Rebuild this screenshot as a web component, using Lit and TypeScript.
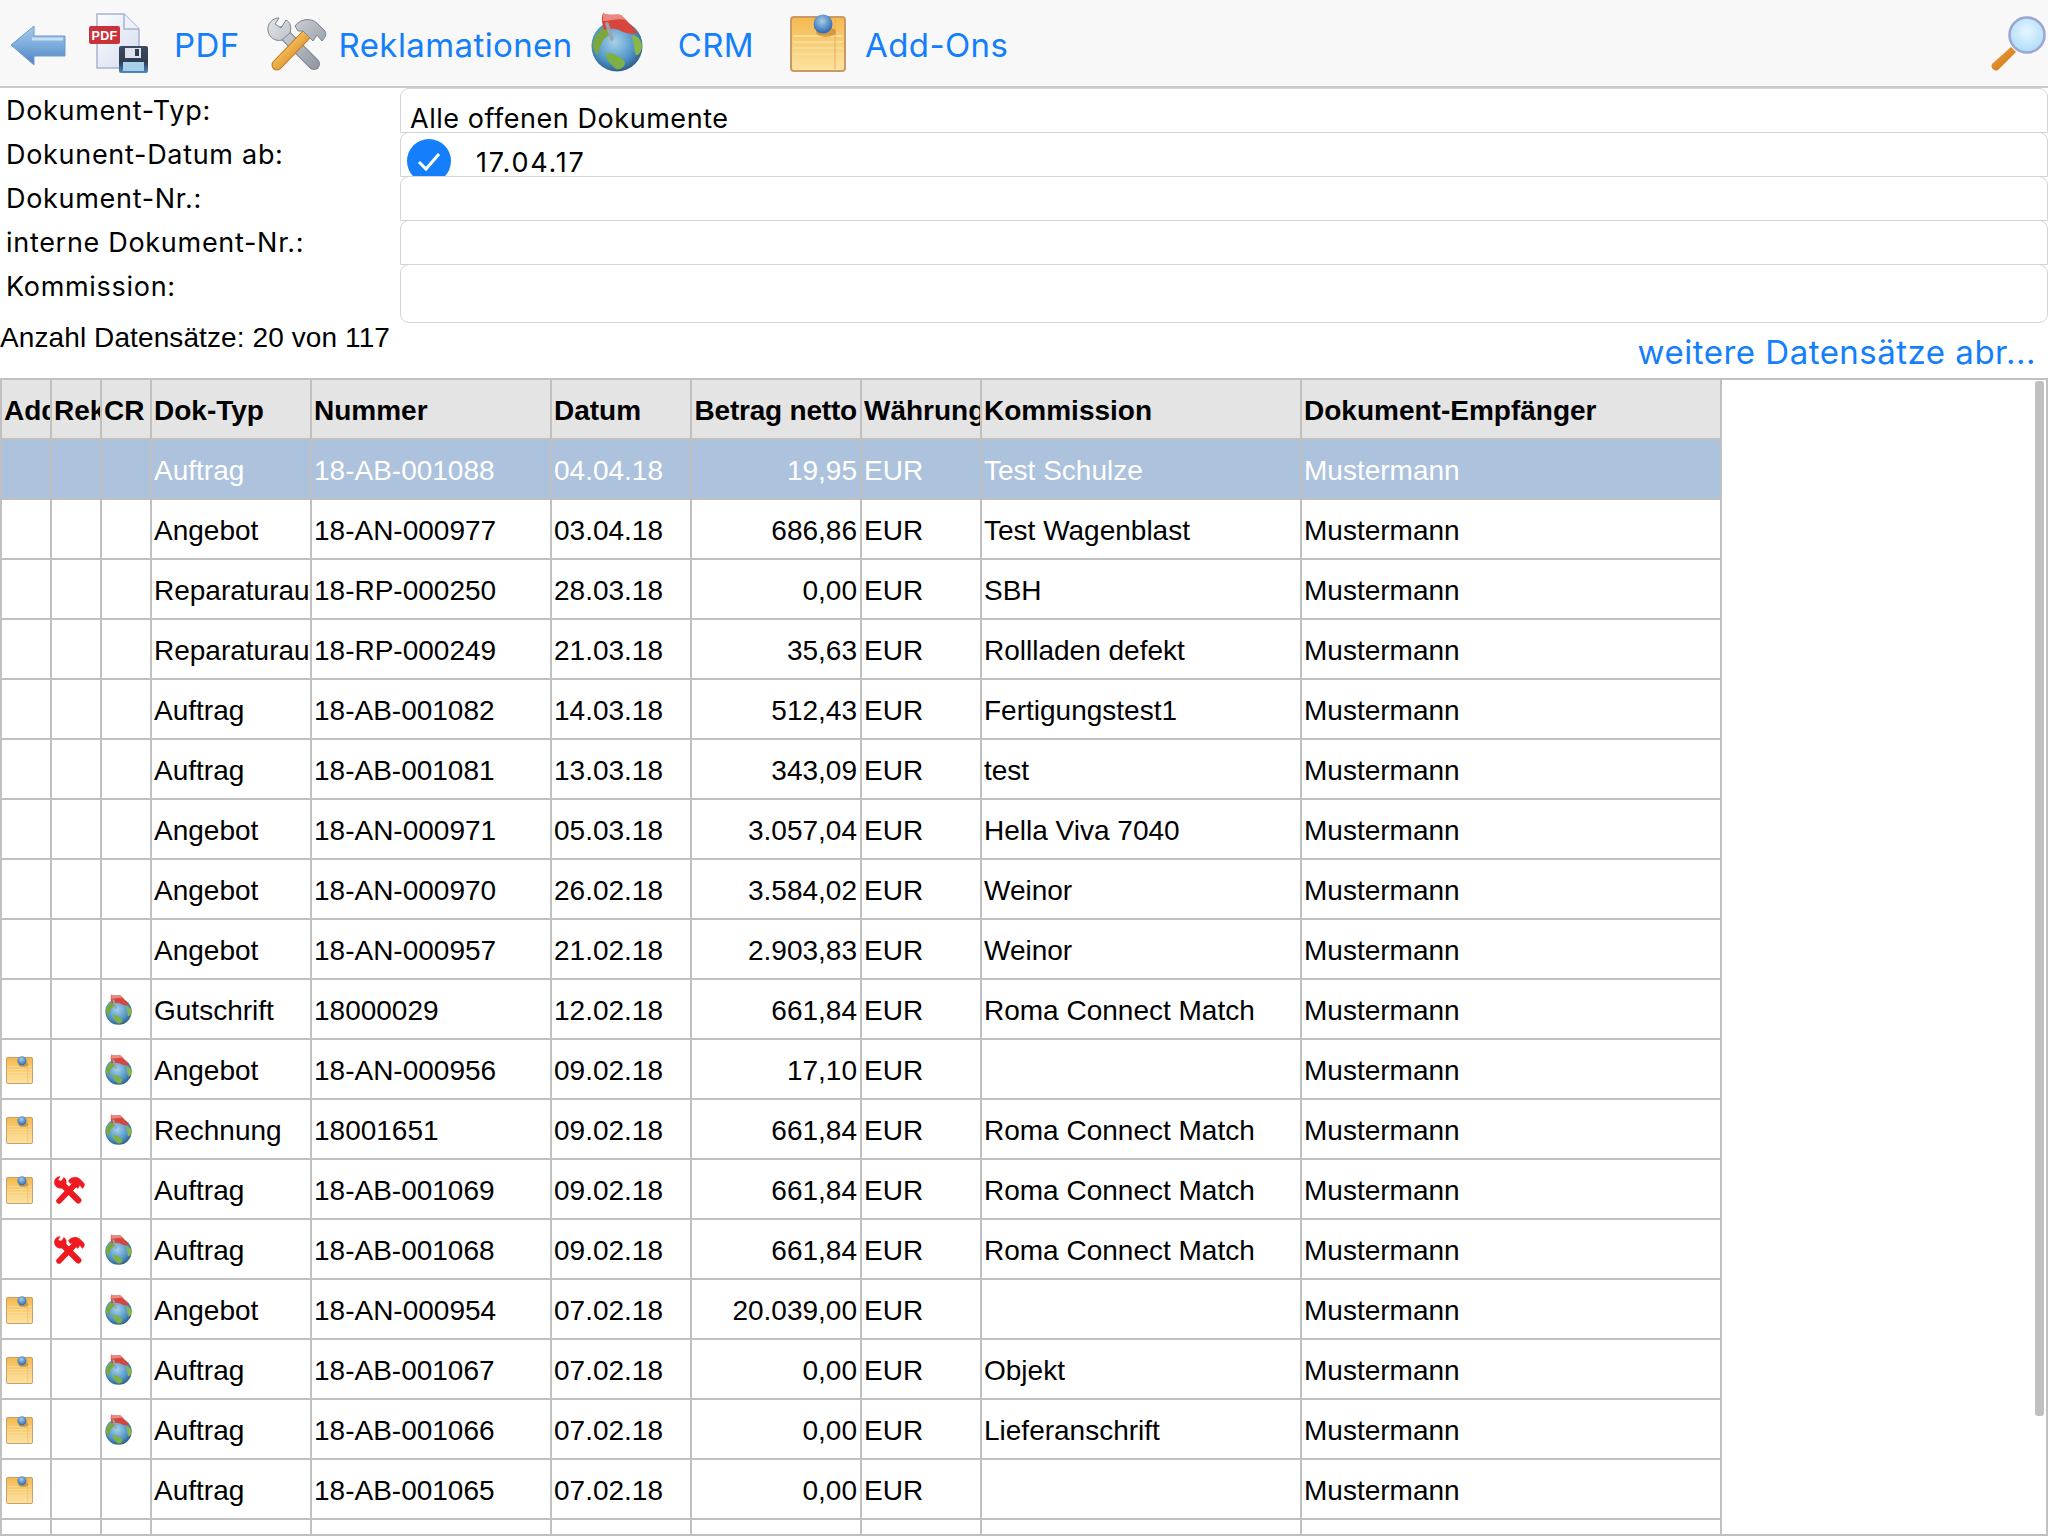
import { LitElement, html, css, svg } from "lit"
import { customElement } from "lit/decorators.js"

type Row = { add?: boolean; rek?: boolean; crm?: boolean; typ: string; nr: string; datum: string; betrag: string; kom: string }

const rows: Row[] = [
  { typ: "Auftrag", nr: "18-AB-001088", datum: "04.04.18", betrag: "19,95", kom: "Test Schulze" },
  { typ: "Angebot", nr: "18-AN-000977", datum: "03.04.18", betrag: "686,86", kom: "Test Wagenblast" },
  { typ: "Reparaturauftrag", nr: "18-RP-000250", datum: "28.03.18", betrag: "0,00", kom: "SBH" },
  { typ: "Reparaturauftrag", nr: "18-RP-000249", datum: "21.03.18", betrag: "35,63", kom: "Rollladen defekt" },
  { typ: "Auftrag", nr: "18-AB-001082", datum: "14.03.18", betrag: "512,43", kom: "Fertigungstest1" },
  { typ: "Auftrag", nr: "18-AB-001081", datum: "13.03.18", betrag: "343,09", kom: "test" },
  { typ: "Angebot", nr: "18-AN-000971", datum: "05.03.18", betrag: "3.057,04", kom: "Hella Viva 7040" },
  { typ: "Angebot", nr: "18-AN-000970", datum: "26.02.18", betrag: "3.584,02", kom: "Weinor" },
  { typ: "Angebot", nr: "18-AN-000957", datum: "21.02.18", betrag: "2.903,83", kom: "Weinor" },
  { crm: true, typ: "Gutschrift", nr: "18000029", datum: "12.02.18", betrag: "661,84", kom: "Roma Connect Match" },
  { add: true, crm: true, typ: "Angebot", nr: "18-AN-000956", datum: "09.02.18", betrag: "17,10", kom: "" },
  { add: true, crm: true, typ: "Rechnung", nr: "18001651", datum: "09.02.18", betrag: "661,84", kom: "Roma Connect Match" },
  { add: true, rek: true, typ: "Auftrag", nr: "18-AB-001069", datum: "09.02.18", betrag: "661,84", kom: "Roma Connect Match" },
  { rek: true, crm: true, typ: "Auftrag", nr: "18-AB-001068", datum: "09.02.18", betrag: "661,84", kom: "Roma Connect Match" },
  { add: true, crm: true, typ: "Angebot", nr: "18-AN-000954", datum: "07.02.18", betrag: "20.039,00", kom: "" },
  { add: true, crm: true, typ: "Auftrag", nr: "18-AB-001067", datum: "07.02.18", betrag: "0,00", kom: "Objekt" },
  { add: true, crm: true, typ: "Auftrag", nr: "18-AB-001066", datum: "07.02.18", betrag: "0,00", kom: "Lieferanschrift" },
  { add: true, typ: "Auftrag", nr: "18-AB-001065", datum: "07.02.18", betrag: "0,00", kom: "" },
]

const backIcon = svg`<svg class="ic-back" width="56" height="42" viewBox="0 0 56 42">
  <defs><linearGradient id="bk" x1="0" y1="0" x2="0" y2="1">
    <stop offset="0" stop-color="#a9c9ea"/><stop offset=".45" stop-color="#7fafdf"/><stop offset="1" stop-color="#4d82c0"/>
  </linearGradient></defs>
  <path d="M1 21 L24 2 V12 H55 V32 H24 V41 Z" fill="url(#bk)" stroke="#6f9bcb" stroke-width="1"/>
  <path d="M22 15 H53" stroke="#dbe9f7" stroke-width="3" opacity=".8"/>
</svg>`

const pdfIcon = svg`<svg class="ic-pdf" width="60" height="60" viewBox="0 0 60 60">
  <defs><linearGradient id="pg" x1="0" y1="0" x2="1" y2="1">
    <stop offset="0" stop-color="#fbfcff"/><stop offset="1" stop-color="#d5dcee"/>
  </linearGradient>
  <linearGradient id="fl" x1="0" y1="0" x2="0" y2="1">
    <stop offset="0" stop-color="#3d4a60"/><stop offset=".6" stop-color="#2f3c52"/><stop offset="1" stop-color="#4d8bc0"/>
  </linearGradient></defs>
  <path d="M9 1 H36 L51 16 V55 H9 Z" fill="url(#pg)" stroke="#a9b2d0" stroke-width="1.5"/>
  <path d="M36 1 V16 H51" fill="#eef1f9" stroke="#a9b2d0" stroke-width="1.5"/>
  <rect x="1" y="13" width="31" height="18" rx="2" fill="#c8323a"/>
  <text x="16.5" y="27" font-family="Liberation Sans" font-size="12.5" font-weight="700" fill="#fff" text-anchor="middle">PDF</text>
  <rect x="31" y="33" width="29" height="27" rx="2" fill="url(#fl)"/>
  <rect x="37" y="35" width="16" height="10" fill="#dfe4ec"/>
  <rect x="47" y="36" width="4" height="7" fill="#2f3c52"/>
  <rect x="35" y="49" width="21" height="9" fill="#a9d0ea"/>
</svg>`

// same crossed wrench and hammer for the toolbar (shaded) and the table (flat red)
const toolShapes = (metal: string, handle: string, edge: string, handleEdge: string) => svg`
  <path d="M15 15 L47 47" stroke=${edge} stroke-width="12" stroke-linecap="round"/>
  <path d="M15 15 L47 47" stroke=${metal} stroke-width="10" stroke-linecap="round"/>
  <path d="M12 1 C5 1 0 7 1 14 C2 20 8 25 15 23 L23 16 C25 10 23 5 19 3 L14 11 L8 7 Z" fill=${metal} stroke=${edge} stroke-width="1"/>
  <path d="M38 19 L10 48" stroke=${handleEdge} stroke-width="11" stroke-linecap="round"/>
  <path d="M38 19 L10 48" stroke=${handle} stroke-width="9" stroke-linecap="round"/>
  <path d="M28 9 C34 1 44 1 50 6 L58 14 C60 17 58 21 55 24 L50 18 L46 24 L36 14 L31 14 Z" fill=${metal} stroke=${edge} stroke-width="1"/>
`

const toolsIcon = svg`<svg class="ic-tools" width="60" height="54" viewBox="0 0 60 54">
  <defs><linearGradient id="gr" gradientUnits="userSpaceOnUse" x1="0" y1="0" x2="60" y2="54">
    <stop offset="0" stop-color="#e4e7ec"/><stop offset="1" stop-color="#868d97"/>
  </linearGradient>
  <linearGradient id="or" gradientUnits="userSpaceOnUse" x1="10" y1="30" x2="30" y2="50">
    <stop offset="0" stop-color="#f9cb68"/><stop offset="1" stop-color="#d8841f"/>
  </linearGradient></defs>
  ${toolShapes("url(#gr)", "url(#or)", "#7d848e", "#b8761f")}
</svg>`

const rekIcon = svg`<svg width="33" height="28" viewBox="0 0 60 54">
  ${toolShapes("#ee1a1f", "#ee1a1f", "#ee1a1f", "#ee1a1f")}
</svg>`

const globeIcon = (w: number, h: number, c = "ic-globe") => svg`<svg class=${c} width=${w} height=${h} viewBox="0 0 52 60">
  <defs><radialGradient id="gb" cx=".45" cy=".42" r=".62">
    <stop offset="0" stop-color="#a8d2ea"/><stop offset=".65" stop-color="#4f94c8"/><stop offset="1" stop-color="#2a567f"/>
  </radialGradient></defs>
  <circle cx="26" cy="34" r="25.5" fill="url(#gb)"/>
  <path d="M2 30 C6 20 12 15 18 13 C22 18 19 24 14 26 C10 29 10 36 6 43 C3 39 1 34 2 30 Z" fill="#7aa83f"/>
  <path d="M14 42 C20 39 29 44 34 50 C34 55 29 58 25 57 C20 53 16 48 14 42 Z" fill="#7fb047"/>
  <path d="M40 24 C45 22 50 27 51 33 C51 39 48 44 45 43 C42 38 44 30 40 24 Z" fill="#8ab54a"/>
  <path d="M12 1 C20 5 26 1 30 3 L40 13 L47 21 C41 23 33 21 28 18 C22 16 17 17 13 18 C11 11 10 6 12 1 Z" fill="#d8453c"/>
  <path d="M12 1 C20 5 26 1 30 3 L35 8 C28 6 20 9 12 9 Z" fill="#e9897f"/>
  <path d="M16 12 L21 27" stroke="#9aa3b0" stroke-width="3.5" stroke-linecap="round"/>
</svg>`

const noteIcon = (w: number, h: number, c = "ic-note") => svg`<svg class=${c} width=${w} height=${h} viewBox="0 0 56 58">
  <defs><linearGradient id="nt" x1="0" y1="0" x2="0" y2="1">
    <stop offset="0" stop-color="#f4b94e"/><stop offset="1" stop-color="#fde3a2"/>
  </linearGradient>
  <radialGradient id="pn" cx=".45" cy=".35" r=".6">
    <stop offset="0" stop-color="#a9cdea"/><stop offset="1" stop-color="#2f6fb3"/>
  </radialGradient></defs>
  <rect x="1" y="3" width="54" height="54" rx="3" fill="url(#nt)" stroke="#c99a68" stroke-width="2"/>
  <path d="M3 22 H53 M3 28 H53 M3 34 H53 M3 40 H53 M3 46 H53" stroke="#f9dc95" stroke-width="2"/>
  <path d="M45 5 V55" stroke="#e2ad62" stroke-width="1"/>
  <ellipse cx="36" cy="18" rx="10" ry="5" fill="#b9771f" opacity=".55"/>
  <circle cx="33" cy="10" r="9.5" fill="url(#pn)"/>
</svg>`

const searchIcon = svg`<svg class="ic-search" width="56" height="56" viewBox="0 0 56 56">
  <defs><radialGradient id="ln" cx=".5" cy=".4" r=".6">
    <stop offset="0" stop-color="#e6f6ff"/><stop offset="1" stop-color="#aedcf8"/>
  </radialGradient>
  <linearGradient id="hd" x1="0" y1="0" x2="1" y2="1">
    <stop offset="0" stop-color="#f2a33c"/><stop offset="1" stop-color="#c87018"/>
  </linearGradient></defs>
  <path d="M21 31 L26 36 L8 54 C5 56 0 52 2 48 Z" fill="url(#hd)"/>
  <path d="M25 29 L28 32" stroke="#8d92b8" stroke-width="4"/>
  <circle cx="37" cy="19" r="17.5" fill="url(#ln)" stroke="#9aa6d0" stroke-width="2.5"/>
</svg>`

@customElement("app-root")
export class AppRoot extends LitElement {
  static styles = css`
    :host {
      display: block;
      width: 2048px;
      height: 1536px;
      overflow: hidden;
      background: #fff;
      font-family: "Inter", "Liberation Sans", sans-serif;
      color: #000;
    }

    .toolbar {
      display: flex;
      align-items: center;
      height: 88px;
      box-sizing: border-box;
      background: #f8f8f8;
      border-bottom: 2px solid #c9c9c9;
      font-size: 33px;
      letter-spacing: 0.4px;
      color: #147efb;
    }

    .toolbar span {
      padding-top: 3px;
    }

    .toolbar svg {
      display: block;
      flex: none;
    }

    .ic-back { margin-left: 10px; margin-top: 3px; }
    .ic-pdf { margin-left: 22px; margin-top: 0; }
    .lbl-pdf { margin-left: 26px; }
    .ic-tools { margin-left: 27px; margin-top: 1px; }
    .lbl-rek { margin-left: 12px; }
    .ic-globe { margin-left: 18px; margin-top: -2px; }
    .lbl-crm { margin-left: 35px; }
    .ic-note { margin-left: 36px; margin-top: -1px; }
    .lbl-add { margin-left: 19px; }
    .ic-search { margin-left: auto; margin-right: 2px; margin-top: 2px; }

    .form {
      display: grid;
      grid-template-columns: 400px 1fr;
      font-size: 27px;
      letter-spacing: 0.55px;
    }

    .labels {
      padding-top: 1px;
      letter-spacing: 0.7px;
    }

    .labels div {
      height: 44px;
      line-height: 44px;
      padding-left: 6px;
    }

    .field {
      position: relative;
      box-sizing: border-box;
      height: 45px;
      margin-bottom: -1px;
      padding: 17px 0 0 9px;
      line-height: 26px;
      background: #fff;
      border: 1px solid #d4d4d4;
      border-radius: 9px 9px 0 0;
      overflow: hidden;
    }

    .field.last {
      height: 59px;
      margin-bottom: 0;
      border-radius: 9px;
    }

    .field.date {
      display: flex;
      gap: 25px;
      padding-top: 6px;
      padding-left: 6px;
    }

    .date .txt {
      padding-top: 11px;
      letter-spacing: 1.8px;
    }

    .check {
      flex: none;
      display: block;
    }

    .info {
      display: flex;
      justify-content: space-between;
      align-items: flex-start;
      height: 55px;
      font: 28px/28px "Liberation Sans", sans-serif;
      letter-spacing: 0.1px;
    }

    .count {
      margin-top: 1px;
    }

    .more {
      margin-top: 9px;
      padding-right: 12px;
      font: 33px/40px "Inter", "Liberation Sans", sans-serif;
      letter-spacing: 0.5px;
      color: #147efb;
    }

    .wrap {
      position: relative;
      box-sizing: border-box;
      height: 1158px;
      overflow: hidden;
      border: 2px solid #c0c0c0;
    }

    .scrollbar {
      position: absolute;
      top: 1px;
      right: 2px;
      width: 9px;
      height: 1035px;
      background: #c0c0c0;
      border-radius: 3px;
    }

    table {
      border-collapse: separate;
      border-spacing: 0;
      table-layout: fixed;
      width: 1720px;
      font: 28px "Liberation Sans", sans-serif;
    }

    th, td {
      box-sizing: border-box;
      height: 60px;
      padding: 3px 0 0 2px;
      border-right: 2px solid #c0c0c0;
      border-bottom: 2px solid #c0c0c0;
      white-space: nowrap;
      overflow: hidden;
      text-align: left;
    }

    th {
      background: #e4e4e4;
      font-weight: 700;
    }

    td.num, th.num {
      padding: 3px 3px 0 0;
      text-align: right;
    }

    th.num {
      letter-spacing: -0.2px;
    }

    tr.sel td {
      background: #adc2dc;
      color: #fff;
    }

    td svg {
      display: block;
      margin-top: -2px;
    }

    td.ic-add { padding-left: 4px; }
    td.ic-rek { padding-left: 1px; }
    td.ic-crm { padding-left: 3px; }
  `

  private renderRow(r: Row, i: number) {
    return html`
      <tr class=${i === 0 ? "sel" : ""}>
        <td class="ic-add">${r.add ? noteIcon(27, 30, "") : ""}</td>
        <td class="ic-rek">${r.rek ? rekIcon : ""}</td>
        <td class="ic-crm">${r.crm ? globeIcon(27, 31, "") : ""}</td>
        <td>${r.typ}</td>
        <td>${r.nr}</td>
        <td>${r.datum}</td>
        <td class="num">${r.betrag}</td>
        <td>EUR</td>
        <td>${r.kom}</td>
        <td>Mustermann</td>
      </tr>
    `
  }

  render() {
    return html`
      <div class="toolbar">
        ${backIcon}
        ${pdfIcon}
        <span class="lbl-pdf">PDF</span>
        ${toolsIcon}
        <span class="lbl-rek">Reklamationen</span>
        ${globeIcon(52, 60)}
        <span class="lbl-crm">CRM</span>
        ${noteIcon(56, 58)}
        <span class="lbl-add">Add-Ons</span>
        ${searchIcon}
      </div>

      <div class="form">
        <div class="labels">
          <div>Dokument-Typ:</div>
          <div>Dokunent-Datum ab:</div>
          <div>Dokument-Nr.:</div>
          <div>interne Dokument-Nr.:</div>
          <div>Kommission:</div>
        </div>
        <div>
          <div class="field">Alle offenen Dokumente</div>
          <div class="field date">
            <svg class="check" width="44" height="44" viewBox="0 0 44 44">
              <circle cx="22" cy="22" r="22" fill="#147efb"/>
              <path d="M12 23 L19 30 L32 15" fill="none" stroke="#fff" stroke-width="3"/>
            </svg>
            <span class="txt">17.04.17</span>
          </div>
          <div class="field"></div>
          <div class="field"></div>
          <div class="field last"></div>
        </div>
      </div>

      <div class="info">
        <span class="count">Anzahl Datensätze: 20 von 117</span>
        <span class="more">weitere Datensätze abr...</span>
      </div>

      <div class="wrap">
        <table>
          <colgroup>
            <col style="width:50px" /><col style="width:50px" /><col style="width:50px" />
            <col style="width:160px" /><col style="width:240px" /><col style="width:140px" />
            <col style="width:170px" /><col style="width:120px" /><col style="width:320px" />
            <col style="width:420px" />
          </colgroup>
          <thead>
            <tr>
              <th>Add-Ons</th><th>Reklamationen</th><th>CR</th><th>Dok-Typ</th><th>Nummer</th><th>Datum</th>
              <th class="num">Betrag netto</th><th>Währung</th><th>Kommission</th><th>Dokument-Empfänger</th>
            </tr>
          </thead>
          <tbody>
            ${rows.map((r, i) => this.renderRow(r, i))}
            <tr>
              <td class="ic-add">${noteIcon(27, 30, "")}</td><td></td><td class="ic-crm">${globeIcon(27, 31, "")}</td>
              <td></td><td></td><td></td><td></td><td></td><td></td><td></td>
            </tr>
          </tbody>
        </table>
        <div class="scrollbar"></div>
      </div>
    `
  }
}
